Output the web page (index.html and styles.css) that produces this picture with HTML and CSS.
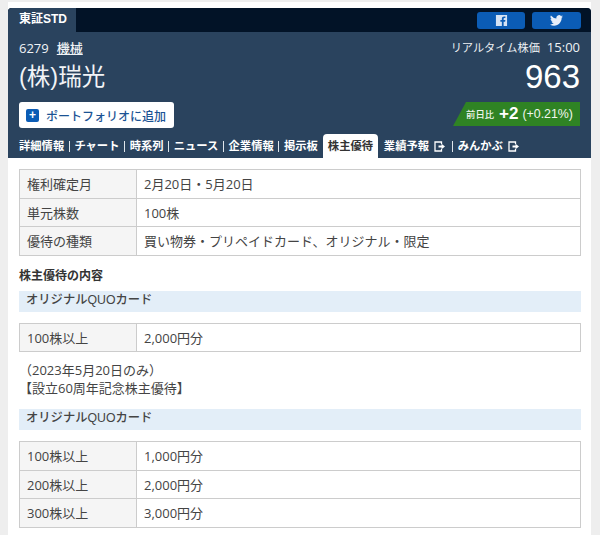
FILE: index.html
```html
<!DOCTYPE html>
<html lang="ja">
<head>
<meta charset="utf-8">
<title>瑞光 株主優待</title>
<link rel="stylesheet" href="styles.css">
</head>
<body>
<div class="page">
  <header class="head">
    <div class="topbar">
      <div class="market">東証STD</div>
      <div class="social">
        <a class="sns sns-fb"><svg width="13" height="13" viewBox="0 0 14 14"><path fill="#d5e3f4" d="M1 1h12v12H9.300V8.400h1.600l.3-1.900H9.300V5.300c0-.6.2-.9.9-.9h1V2.700c-.3 0-.8-.1-1.400-.1-1.500 0-2.400.9-2.400 2.500v1.400H5.800v1.900h1.600V13H1z"/></svg></a>
        <a class="sns sns-tw"><svg width="13" height="11" viewBox="0 0 24 20"><path fill="#e6eefa" d="M24 2.400c-.9.4-1.800.7-2.800.8 1-.6 1.800-1.600 2.200-2.700-1 .6-2 1-3.100 1.200A4.900 4.900 0 0 0 11.900 6.200 14 14 0 0 1 1.700.9a4.900 4.900 0 0 0 1.500 6.600c-.8 0-1.600-.2-2.200-.6 0 2.400 1.700 4.400 3.900 4.900-.7.2-1.500.2-2.200.1.600 2 2.400 3.400 4.600 3.400A9.900 9.900 0 0 1 0 17.300 14 14 0 0 0 7.500 19.500c9.100 0 14.300-7.700 14-14.600 1-.7 1.800-1.500 2.500-2.500z"/></svg></a>
      </div>
    </div>
    <div class="info">
      <div class="info-left">
        <div class="code"><span>6279</span><a class="sector">機械</a></div>
        <div class="name">(株)瑞光</div>
        <button class="add"><span class="plus">+</span>ポートフォリオに追加</button>
      </div>
      <div class="info-right">
        <div class="rt"><span class="rt-label">リアルタイム株価</span><span>15:00</span></div>
        <div class="price">963</div>
        <div class="change"><span class="lbl">前日比</span><b>+2</b><span class="pct">(+0.21%)</span></div>
      </div>
    </div>
    <nav class="tabs">
      <a class="tab">詳細情報</a><i></i>
      <a class="tab">チャート</a><i></i>
      <a class="tab">時系列</a><i></i>
      <a class="tab">ニュース</a><i></i>
      <a class="tab">企業情報</a><i></i>
      <a class="tab">掲示板</a>
      <a class="tab active">株主優待</a>
      <a class="tab">業績予報<svg class="ext" width="12" height="11" viewBox="0 0 12 11"><path fill="none" stroke="#fff" stroke-width="1.300" d="M7.500 3V1H1v9h6.500V8"/><path fill="#fff" d="M4.500 4.500h3V2.800l3.500 2.700-3.500 2.700V6.500h-3z"/></svg></a><i class="after-ext"></i>
      <a class="tab">みんかぶ<svg class="ext" width="12" height="11" viewBox="0 0 12 11"><path fill="none" stroke="#fff" stroke-width="1.300" d="M7.500 3V1H1v9h6.500V8"/><path fill="#fff" d="M4.500 4.500h3V2.800l3.500 2.700-3.500 2.700V6.500h-3z"/></svg></a>
    </nav>
  </header>
  <main class="content">
    <table class="tbl tbl-first">
      <tr><th>権利確定月</th><td>2月20日・5月20日</td></tr>
      <tr><th>単元株数</th><td>100株</td></tr>
      <tr><th>優待の種類</th><td>買い物券・プリペイドカード、オリジナル・限定</td></tr>
    </table>
    <h2 class="sec">株主優待の内容</h2>
    <h3 class="band">オリジナルQUOカード</h3>
    <table class="tbl">
      <tr><th>100株以上</th><td>2,000円分</td></tr>
    </table>
    <p class="note">（2023年5月20日のみ）<br>【設立60周年記念株主優待】</p>
    <h3 class="band">オリジナルQUOカード</h3>
    <table class="tbl">
      <tr><th>100株以上</th><td>1,000円分</td></tr>
      <tr><th>200株以上</th><td>2,000円分</td></tr>
      <tr><th>300株以上</th><td>3,000円分</td></tr>
    </table>
  </main>
</div>
</body>
</html>
```
FILE: styles.css
```css
* { box-sizing: border-box; }
html, body { margin: 0; height: 535px; overflow: hidden; }
body {
  background: #eeeeee;
  padding: 2px 9px 0 8px;
  font-family: "Open Sans", "Noto Sans CJK JP", sans-serif;
  font-size: 13px;
  color: #444;
}
.page {
  background: #fff;
  height: 533px;
  padding-top: 6px;
}
.head {
  background: #2a435e;
  height: 150px;
  border-radius: 4px 4px 0 0;
  color: #fff;
  display: flex;
  flex-direction: column;
  overflow: hidden;
}
.topbar {
  height: 24px;
  background: #021327;
  display: flex;
  justify-content: space-between;
}
.market {
  width: 68px;
  background: #2a435e;
  padding-left: 11px;
  font-family: "Liberation Sans", "Noto Sans CJK JP", sans-serif;
  font-size: 12px;
  font-weight: bold;
  line-height: 22px;
}
.social { display: flex; gap: 7px; padding: 4px 10px 0 0; }
.sns {
  height: 17px;
  border-radius: 3px;
  background: #0b5cb5;
  display: flex;
  align-items: center;
  justify-content: center;
}
.sns-fb { width: 48px; }
.sns-tw { width: 49px; }
.info {
  display: flex;
  justify-content: space-between;
  padding: 0 11px 0 11px;
  height: 94px;
}
.code { display: flex; gap: 8px; font-size: 13px; line-height: 18px; margin-top: 7px; color: #f0f3f6; }
.sector { text-decoration: underline; font-weight: 500; }
.name {
  font-family: "Liberation Sans", "Noto Sans CJK JP", sans-serif;
  font-size: 23.500px;
  line-height: 28px;
  margin-top: 6px;
  color: #f2f4f7;
}
.add {
  margin: 11px 0 0;
  width: 155px;
  height: 26px;
  border: 0;
  border-radius: 3px;
  background: #fff;
  color: #1b5394;
  font: 500 12px "Liberation Sans", "Noto Sans CJK JP", sans-serif;
  display: flex;
  align-items: center;
  white-space: nowrap;
  padding: 0 0 0 7px;
  gap: 7px;
}
.plus {
  width: 13px;
  height: 13px;
  border-radius: 2px;
  background: #0b5cb5;
  color: #fff;
  font-size: 12px;
  font-weight: bold;
  line-height: 13px;
  text-align: center;
}
.info-right { display: flex; flex-direction: column; align-items: flex-end; }
.rt { display: flex; gap: 7px; align-items: baseline; font-size: 13px; line-height: 16px; margin-top: 7px; color: #eef1f4; }
.rt-label { font-size: 11.200px; }
.price {
  font-family: "Liberation Sans", sans-serif;
  font-size: 33px;
  line-height: 36px;
  margin-top: 3px;
  color: #fff;
}
.change {
  margin-top: 7px;
  width: 127px;
  height: 25px;
  background: #2f8324;
  clip-path: polygon(13px 0, 100% 0, 100% 100%, 0 100%);
  display: flex;
  align-items: center;
  justify-content: flex-end;
  padding-right: 7px;
  font-family: "Liberation Sans", "Noto Sans CJK JP", sans-serif;
  font-size: 12.400px;
  color: #f1f7ef;
}
.lbl { font-size: 9.300px; font-weight: 500; margin-right: 5px; }
.change b { font-size: 17px; margin-right: 4px; color: #fff; }
.tabs {
  display: flex;
  align-items: flex-end;
  padding-left: 11px;
  height: 32px;
  font-family: "Liberation Sans", "Noto Sans CJK JP", sans-serif;
  font-size: 11.300px;
  font-weight: bold;
}
.tabs i { width: 1px; height: 11px; background: #dfe5eb; margin: 0 4.600px 6px; }
.tabs .after-ext { margin-left: 6px; }
.tab { line-height: 23px; white-space: nowrap; display: flex; align-items: center; }
.tab.active {
  width: 55px;
  height: 24px;
  margin: 0 6px 0 5px;
  padding-left: 5px;
  background: #fff;
  color: #333;
  border-radius: 4px 4px 0 0;
}
.ext { margin-left: 5px; }
.content { padding: 11px 10px 0 11px; }
.tbl {
  width: 562px;
  border-collapse: collapse;
  table-layout: fixed;
  font-size: 13px;
}
.tbl th, .tbl td {
  border: 1px solid #cccccc;
  height: 28.500px;
  padding: 0 7px;
  text-align: left;
  font-weight: normal;
}
.tbl th { width: 117px; background: #f5f5f5; }
.sec { margin: 12px 0 0; font-size: 12px; line-height: 16px; font-weight: bold; color: #333; }
.band {
  margin: 7px 0 11px;
  height: 21px;
  background: #e3eef8;
  padding-left: 7px;
  font-family: "Liberation Sans", "Noto Sans CJK JP", sans-serif;
  font-size: 12.300px;
  line-height: 19px;
  font-weight: 500;
  color: #444;
}
.note { margin: 9px 0 12px; font-size: 13px; line-height: 18px; }
```
